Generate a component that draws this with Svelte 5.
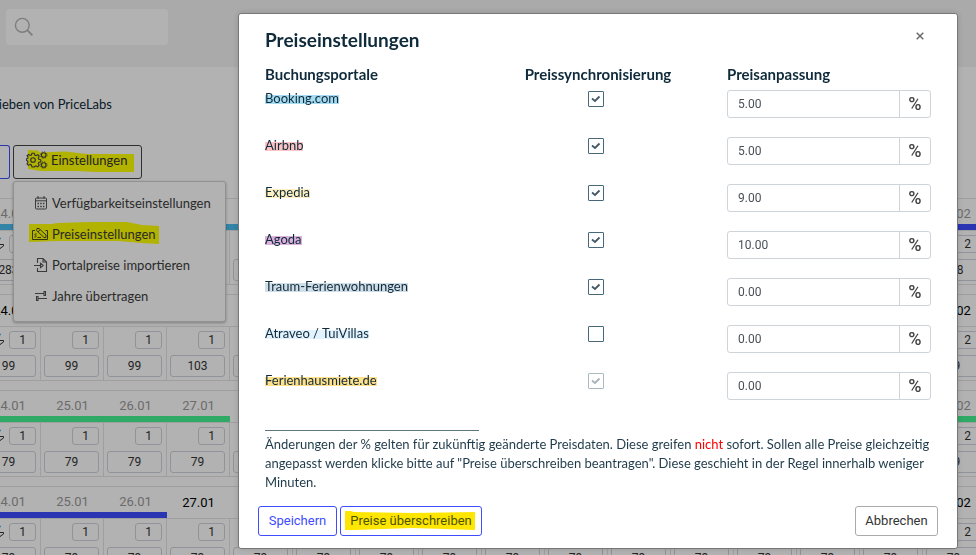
<script>
  const portals = $state([
    { id: 'booking', name: 'Booking.com', tint: '#a6dcf2', sync: true, value: '5.00' },
    { id: 'airbnb', name: 'Airbnb', tint: '#fcc4c4', sync: true, value: '5.00' },
    { id: 'expedia', name: 'Expedia', tint: '#fff0c2', sync: true, value: '9.00' },
    { id: 'agoda', name: 'Agoda', tint: '#dbb2dc', sync: true, value: '10.00' },
    { id: 'traum', name: 'Traum-Ferienwohnungen', tint: '#d0dee8', sync: true, value: '0.00' },
    { id: 'atraveo', name: 'Atraveo / TuiVillas', tint: '#e2f3ff', sync: false, value: '0.00' },
    { id: 'ferienhaus', name: 'Ferienhausmiete.de', tint: '#ffe08c', sync: true, value: '0.00', locked: true }
  ]);

  const days = ['24.01', '25.01', '26.01', '27.01', '28.01', '29.01', '30.01', '31.01',
    '01.02', '02.02', '03.02', '04.02', '05.02', '06.02', '07.02', '08.02'];

  const sky = '#49bdf0';
  const indigo = '#3d4dff';
  const green = '#43f292';

  function build(bar, price, nightsAtEnd) {
    return days.map((day, i) => ({
      day, bar: bar(i), price: price(i), nights: i > 10 ? nightsAtEnd : 1
    }));
  }

  const blocks = [
    build((i) => (i < 8 ? sky : indigo), (i) => (i > 10 ? 288 : 283), 2),
    build(() => null, (i) => (i === 3 ? 103 : 99), 2),
    build(() => green, () => 79, 2),
    build((i) => (i < 3 ? indigo : null), () => 79, 2)
  ];
  blocks[2][4].bar = null;
</script>

<div class="page">
  <header class="topbar">
    <label class="search">
      <svg width="20" height="20" viewBox="0 0 20 20" fill="none" stroke="#b4b4b4" stroke-width="1.4">
        <circle cx="8.3" cy="8.3" r="6.9" />
        <path d="M13.2 13.2 18.4 18.4" stroke-width="1.8" />
      </svg>
      <input type="text" aria-label="Suche" />
    </label>
  </header>

  <p class="intro">ieben von PriceLabs</p>

  <div class="toolbar">
    <button class="cut" aria-label="Aktion"></button>
    <div class="drop">
      <button class="settings">
        <svg class="marker" width="108" height="24" viewBox="0 0 108 24">
          <path d="M1 1 11 1.5 13 3.5 38 2.5 60 5 107 5V23H70L48 22H14L1 20Z" fill="#ffff00" />
        </svg>
        <svg class="icon" width="22" height="18" viewBox="0 0 22 18" fill="none" stroke="#444" stroke-width="1.1">
          <path d="M6 2.2h2.2l.5 1.9 1.3.6 1.8-1 1.4 1.5-.9 1.8.5 1.2 2 .6v2l-2 .6-.5 1.2.9 1.8-1.5 1.5-1.7-1-1.3.6L8.200 16H6l-.6-2-1.300-.6-1.700 1L1 12.900l1-1.700-.5-1.200L.6 9.500V7.800l1.300-.6L2 6 1 4.800 2.500 3.500l1.700 1 1.200-.5Z" />
          <circle cx="7" cy="9" r="2.300" />
          <circle cx="17.700" cy="4" r="2.300" /><circle cx="17.700" cy="4" r="3.300" stroke-width=".8" stroke-dasharray="1.300 1.300" />
          <circle cx="17.700" cy="14" r="2.300" /><circle cx="17.700" cy="14" r="3.300" stroke-width=".8" stroke-dasharray="1.300 1.300" />
        </svg>
        <span>Einstellungen</span>
      </button>
      <nav class="menu">
        <a href="#availability">
          <svg class="icon" width="16" height="16" viewBox="0 0 16 16" fill="none" stroke="#555" stroke-width="1">
            <rect x="2.500" y="3" width="11" height="11" rx="1" /><path d="M2.500 5.800h11M5 1v3M11 1v3" />
            <path d="M4.500 8.500h7M4.500 11.500h7" stroke-width="1.600" stroke-dasharray="1.500 1.200" />
          </svg>
          <span>Verfügbarkeitseinstellungen</span>
        </a>
        <a href="#prices">
          <svg class="marker" width="131" height="24" viewBox="0 0 131 24">
            <path d="M0 3H23L28 2 60 1H98L113 4 130 5V23L112 22 90 20H30L0 21Z" fill="#ffff00" />
          </svg>
          <svg class="icon wide" width="18" height="16" viewBox="0 0 18 16" fill="none" stroke="#4a4a20" stroke-width="1">
            <path d="M4 4.500H1.500v9h15v-9H14.500" /><path d="M6 2.500 5.500 4.500 13 11.500H15V9L8 2.500ZM7 6 8.800 4M6.500 11.500H10" />
            <path d="M5.600 8c-1.800-.6-2.500.8-1.200 1.300 1.600.6 1 2.100-1 1.500" />
          </svg>
          <span>Preiseinstellungen</span>
        </a>
        <a href="#import">
          <svg class="icon" width="16" height="16" viewBox="0 0 16 16" fill="none" stroke="#555" stroke-width="1.100">
            <path d="M4.500 6V1.500H10L13.500 5v9.500h-9V11M10 1.500V5h3.500" /><path d="M1 8.500h7M7.500 6.300 10.200 8.500 7.500 10.700Z" />
          </svg>
          <span>Portalpreise importieren</span>
        </a>
        <a href="#years">
          <svg class="icon" width="16" height="16" viewBox="0 0 16 16" fill="none" stroke="#555" stroke-width="1.100">
            <path d="M2 5.500H11M11 3.500h1.500v4H11ZM5 10.500h9M5 8.500H3.500v4H5Z" />
          </svg>
          <span>Jahre übertragen</span>
        </a>
      </nav>
    </div>
  </div>

  <main class="calendar">
    {#each blocks as block}
      <section class="block">
        <div class="days">
          {#each block as cell}
            <div class={['day', cell.bar && 'booked']}>
              <span>{cell.day}</span>
              {#if cell.bar}<i style:background={cell.bar}></i>{/if}
            </div>
          {/each}
        </div>
        <div class="cells">
          {#each block as cell, i}
            <div class="cell">
              <div class="stay">
                {#if i === 0}
                  <svg width="8" height="14" viewBox="0 0 8 14" fill="none">
                    <path d="M0 1.500h4" stroke="#49bdf0" stroke-width="1.500" />
                    <path d="M0 7.500h6.500V9L3 11.500 1 9.500" stroke="#333" />
                  </svg>
                {/if}
                <span class="box nights">{cell.nights}</span>
              </div>
              <span class="box price">{cell.price}</span>
            </div>
          {/each}
        </div>
      </section>
    {/each}
  </main>
</div>

<div class="overlay">
  <div class="modal" role="dialog" aria-labelledby="dialog-title">
    <div class="head">
      <h1 id="dialog-title">Preiseinstellungen</h1>
      <button class="close" aria-label="Schließen">
        <svg width="8" height="8" viewBox="0 0 8 8" stroke="#6a6a6a" stroke-width="1.500"><path d="M.7.7 7.300 7.300M7.300.7.7 7.300" /></svg>
      </button>
    </div>

    <table>
      <colgroup><col /><col class="mid" /><col /></colgroup>
      <thead>
        <tr><th>Buchungsportale</th><th class="center">Preissynchronisierung</th><th>Preisanpassung</th></tr>
      </thead>
      <tbody>
        {#each portals as p (p.id)}
          <tr>
            <td><label class="name" for={`sync-${p.id}`} style:--tint={p.tint}>{p.name}</label></td>
            <td class="center">
              <span class={['check', p.locked && 'locked']}>
                <input type="checkbox" id={`sync-${p.id}`} bind:checked={p.sync} disabled={p.locked} />
                {#if p.sync}
                  <svg width="16" height="16" viewBox="0 0 16 16" fill="none" stroke="#435966" stroke-width="1.800"><path d="M4 7.500 7 10 11.500 5.500" /></svg>
                {/if}
              </span>
            </td>
            <td>
              <div class="group">
                <input type="text" aria-label={`Preisanpassung ${p.name}`} bind:value={p.value} />
                <span>%</span>
              </div>
            </td>
          </tr>
        {/each}
      </tbody>
    </table>

    <div class="note">
      <div class="rule"></div>
      <p>Änderungen der % gelten für zukünftig geänderte Preisdaten. Diese greifen <em>nicht</em> sofort. Sollen alle Preise gleichzeitig angepasst werden klicke bitte auf "Preise überschreiben beantragen". Diese geschieht in der Regel innerhalb weniger Minuten.</p>
    </div>

    <div class="foot">
      <button class="primary save">Speichern</button>
      <button class="primary overwrite">
        <svg class="marker" width="132" height="20" viewBox="0 0 132 20">
          <path d="M1 0H7L10 1 68 2 131 1V19L68 17 10 19H1Z" fill="#ffe600" />
        </svg>
        <span>Preise überschreiben</span>
      </button>
      <button class="cancel">Abbrechen</button>
    </div>
  </div>
</div>

<style>
  :global(body) {
    margin: 0;
    background: #fff;
    font-family: Lato, Roboto, sans-serif;
    font-size: 13px;
    color: #0f2a3a;
  }
  .page, .page *, .overlay, .overlay * { box-sizing: border-box; }
  button, input { font: inherit; color: inherit; margin: 0; }
  p, h1 { margin: 0; }

  .page { height: 100vh; overflow: hidden; }
  .topbar { height: 67px; padding: 9px 6px; background: #f4f4f4; }
  .search {
    display: flex; align-items: center; width: 162px; height: 36px;
    padding: 0 8px; border-radius: 4px; background: #fff;
  }
  .search input { flex: 1; min-width: 0; border: 0; outline: 0; background: none; }
  .intro {
    display: flex; justify-content: flex-end; width: 112px; overflow: hidden;
    margin-top: 27px; line-height: 20px; white-space: nowrap;
  }
  .toolbar { display: flex; gap: 3px; margin-top: 31px; }
  .cut {
    width: 10px; height: 34px; padding: 0; border: 1px solid #3d4dff; border-left: 0;
    border-radius: 0 3px 3px 0; background: #fff;
  }
  .drop { position: relative; }
  .settings {
    position: relative; display: flex; align-items: center; gap: 3px;
    width: 129px; height: 34px; padding: 0 12px 4px; border: 1px solid #444;
    border-radius: 3px; background: #fff; color: #333;
  }
  .marker { position: absolute; z-index: 0; }
  .icon { position: relative; z-index: 1; flex: none; }
  .settings span, .menu span, .overwrite span { position: relative; z-index: 1; white-space: nowrap; }
  .settings .marker { left: 13px; top: 3px; }
  .menu {
    position: absolute; z-index: 2; left: 0; top: 36px; width: 213px; padding: 5px 0 10px;
    border: 1px solid #d0d0d0; border-radius: 3px; background: #fff;
    box-shadow: 0 1px 3px rgba(0, 0, 0, .3);
  }
  .menu a {
    position: relative; display: flex; align-items: center; gap: 3px; height: 31px;
    padding: 0 19px; color: #3c3c3c; text-decoration: none;
  }
  .menu .marker { left: 15px; top: 3px; }
  .wide { margin-left: -2px; }

  .calendar { margin: 19px 0 0 -22px; }
  .block {
    width: max-content; margin-bottom: 9px;
    border-top: 1px solid #e4e4e4; border-bottom: 1px solid #e4e4e4;
  }
  .days, .cells { display: flex; }
  .days { height: 32px; border-bottom: 1px solid #e4e4e4; }
  .day {
    display: flex; flex-direction: column; justify-content: space-between; width: 63px;
    padding-top: 7px; text-align: center; line-height: 18px; color: #000;
    font-family: Roboto, sans-serif;
  }
  .booked { padding-top: 6px; color: #9a9a9a; }
  .day i { height: 6px; }
  .cell {
    display: flex; flex-direction: column; gap: 6px; width: 63px; height: 53px;
    padding: 4px 4px 0 3px; border-right: 1px solid #e4e4e4;
  }
  .stay { display: flex; justify-content: flex-end; align-items: center; gap: 4px; }
  .box {
    display: flex; align-items: center; justify-content: center;
    border: 1px solid #ced4da; border-radius: 3px; font-family: Roboto, sans-serif; font-size: 12px; color: #333;
  }
  .nights { width: 27px; height: 18px; }
  .price { height: 22px; }

  .overlay {
    position: fixed; inset: 0; z-index: 10; display: flex; align-items: flex-start;
    padding: 13px 18px 7px 238px; background: rgba(0, 0, 0, .3);
  }
  .modal {
    flex: 1; min-width: 0; padding: 14px 19px 12px; border: 1px solid #777; border-radius: 3px;
    background: #fff; box-shadow: 0 0 6px rgba(0, 0, 0, .15);
  }
  .head { display: flex; justify-content: space-between; align-items: flex-start; padding: 0 14px 0 7px; }
  h1 { font-size: 19px; line-height: 24px; font-weight: 700; }
  .close { display: flex; padding: 4px 0; border: 0; background: none; }

  table { width: calc(100% - 14px); margin: 11px 7px 0; table-layout: fixed; border-collapse: collapse; }
  .mid { width: 258px; }
  th { height: 27px; padding: 0 0 6px; font-size: 15px; line-height: 20px; font-weight: 700; text-align: left; }
  td { height: 47px; padding: 0; vertical-align: top; }
  th.center, td.center { text-align: center; }
  td.center { padding-right: 4px; }
  .name {
    display: block; width: fit-content; line-height: 16px;
    background: linear-gradient(var(--tint), var(--tint)) 0 5px / 100% 9px no-repeat;
  }
  .check { position: relative; display: inline-flex; margin-top: 1px; }
  .check input {
    appearance: none; width: 16px; height: 16px; border: 1px solid #47677a;
    border-radius: 1px; background: #fff;
  }
  .check svg { position: absolute; inset: 0; pointer-events: none; }
  .locked { opacity: .45; }
  .group { display: flex; height: 28px; border: 1px solid #ced4da; border-radius: 3px; }
  .group input {
    flex: 1; min-width: 0; padding: 0 10px; border: 0; outline: 0; background: none;
    font-family: Roboto, sans-serif; font-size: 12px; color: #495057;
  }
  .group span {
    display: flex; align-items: center; justify-content: center; width: 31px; padding-bottom: 2px;
    border-left: 1px solid #ced4da; font-family: Roboto, sans-serif; font-size: 18px; font-weight: 500; color: #444;
  }

  .note { padding: 11px 7px 0; line-height: 19px; color: #1f3b4a; }
  .rule { width: 214px; margin-bottom: 4px; border-top: 1px solid #5d7682; }
  em { font-style: normal; color: #f00; }

  .foot { display: flex; gap: 3px; margin-top: 14px; }
  .foot button {
    position: relative; height: 30px; padding: 0 9px 2px; border-radius: 3px; background: #fff;
    font-family: Roboto, sans-serif; white-space: nowrap;
  }
  .primary { border: 1px solid #3d4dff; color: #3d4dff; }
  .save { width: 79px; }
  .overwrite { width: 142px; }
  .overwrite span { color: #4c5200; }
  .overwrite .marker { left: 3px; top: 4px; }
  .foot .cancel { width: 83px; margin-left: auto; border: 1px solid #aaa; color: #333; }
</style>
